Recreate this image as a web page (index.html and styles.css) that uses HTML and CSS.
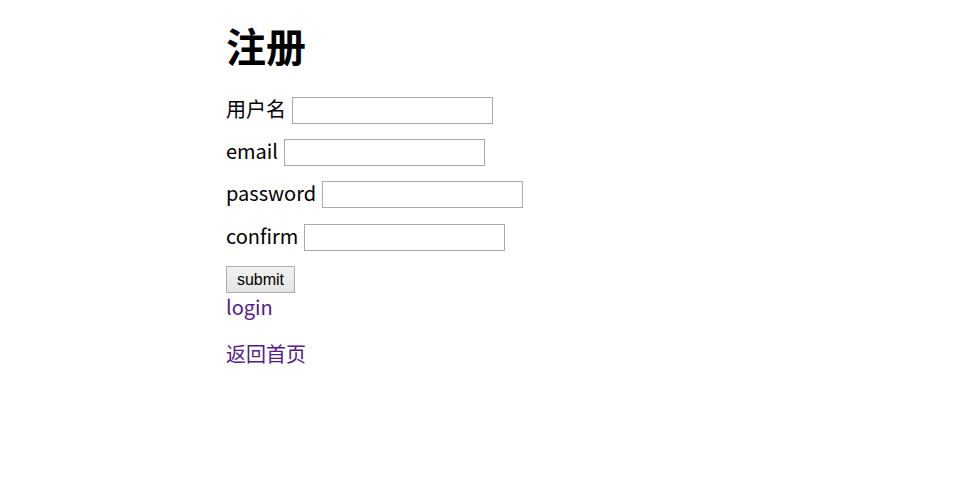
FILE: index.html
```html
<!DOCTYPE html>
<html lang="zh-CN">
<head>
<meta charset="utf-8">
<title>注册</title>
<link rel="stylesheet" href="styles.css">
</head>
<body>
<div class="page">
  <h1 class="title">注册</h1>
  <form class="form">
    <div class="row"><label>用户名</label><input class="field" type="text"></div>
    <div class="row"><label>email</label><input class="field" type="text"></div>
    <div class="row"><label>password</label><input class="field" type="password"></div>
    <div class="row last"><label>confirm</label><input class="field" type="password"></div>
    <div class="actions"><button class="btn" type="button">submit</button></div>
  </form>
  <a class="link" href="#">login</a>
  <a class="link home" href="#">返回首页</a>
</div>
</body>
</html>
```
FILE: styles.css
```css
html, body {
  margin: 0;
  padding: 0;
  background: #fff;
}
body {
  font-family: "Noto Sans CJK SC", "Noto Sans", sans-serif;
  font-size: 20px;
  color: #000;
}
.page {
  width: 527px;
  margin: 0 auto;
  display: flex;
  flex-direction: column;
  align-items: flex-start;
}
.title {
  font-size: 40px;
  font-weight: 700;
  line-height: 52px;
  margin: 19px 0 0 0;
}
.form {
  display: flex;
  flex-direction: column;
  margin-top: 26px;
}
.row {
  height: 27px;
  display: flex;
  align-items: center;
  gap: 6px;
  margin-bottom: 15px;
}
.row.last {
  margin-top: 1px;
}
.row label {
  line-height: 27px;
  padding-bottom: 4px;
}
.field {
  width: 201px;
  height: 27px;
  box-sizing: border-box;
  border: 1px solid #a9a9a9;
  padding: 0;
  margin: 0;
  background: #fff;
  font-size: 14px;
}
.actions {
  height: 27px;
  display: flex;
  align-items: flex-start;
}
.btn {
  height: 27px;
  width: 69px;
  padding: 0;
  font-family: Arial, "Liberation Sans", sans-serif;
  font-size: 16px;
  color: #000;
  border: 1px solid #adadad;
  background: linear-gradient(#f2f2f2, #e4e4e4);
  border-radius: 0;
}
.link {
  color: #551a8b;
  text-decoration: none;
  line-height: 28px;
}
.home {
  margin-top: 19px;
}
```
